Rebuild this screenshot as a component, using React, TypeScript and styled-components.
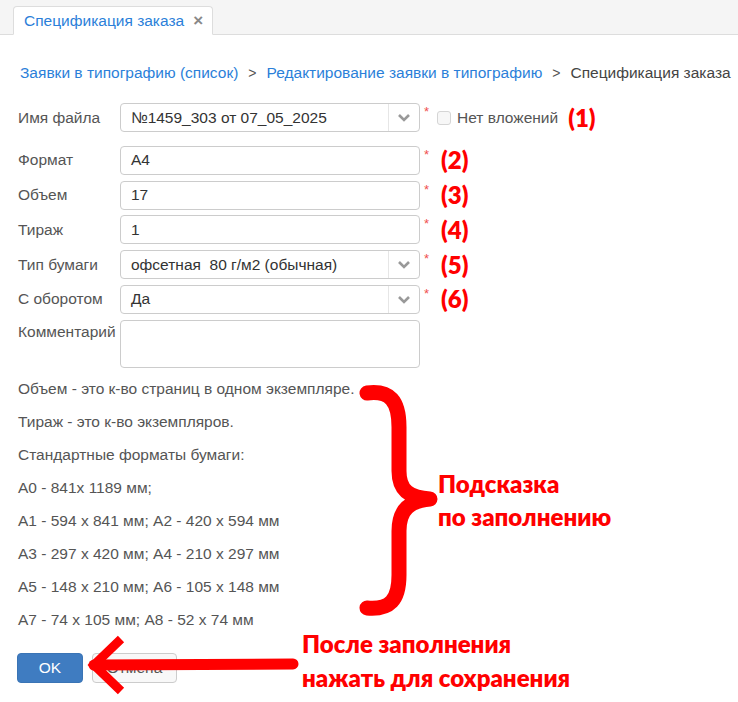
import React from "react";
import styled, { createGlobalStyle } from "styled-components";

const GlobalStyle = createGlobalStyle`
  body {
    margin: 0;
    background: #fff;
    font-family: "Liberation Sans", Arial, sans-serif;
    font-size: 15.5px;
    color: #333;
  }
  * { box-sizing: border-box; }
`;

const LINK = "#2b7fd9";
const MARK = "#ff0000";

const TabBar = styled.div`
  display: flex;
  align-items: flex-end;
  height: 35px;
  padding-left: 13px;
  background: #f5f5f5;
  border-bottom: 1px solid #ddd;
`;

const Tab = styled.div`
  display: flex;
  align-items: center;
  gap: 9px;
  height: 29px;
  margin-bottom: -1px;
  padding: 0 9px 0 10px;
  background: #fff;
  border: 1px solid #ddd;
  border-bottom-color: #fff;
  border-radius: 4px 4px 0 0;
  color: ${LINK};
  font-size: 15.5px;
`;

const Close = styled.span`
  color: #888;
  font-size: 17px;
  font-weight: bold;
  line-height: 1;
`;

const Content = styled.div`
  padding: 0 17px;
`;

const Breadcrumb = styled.div`
  display: flex;
  align-items: center;
  gap: 10px;
  margin-top: 28px;
  padding-left: 3px;
  line-height: 20px;
  color: #444;
  white-space: nowrap;
`;

const Crumb = styled.span`
  color: ${LINK};
`;

const Sep = styled.span`
  color: #555;
  font-size: 14px;
`;

const Form = styled.div`
  display: flex;
  flex-direction: column;
  gap: 5.8px;
  margin-top: 20px;
`;

const Row = styled.div<{ $top?: boolean; $after?: number }>`
  display: flex;
  align-items: ${(p) => (p.$top ? "flex-start" : "center")};
  margin-bottom: ${(p) => p.$after ?? 0}px;
`;

const Label = styled.div<{ $top?: boolean }>`
  width: 103px;
  padding-left: 1px;
  padding-top: ${(p) => (p.$top ? "3px" : "0")};
  color: #555;
  white-space: nowrap;
`;

const Field = styled.div<{ $h?: number }>`
  display: flex;
  align-items: center;
  width: 300px;
  height: ${(p) => p.$h ?? 29}px;
  border: 1px solid #ccc;
  border-radius: 4px;
  background: #fff;
  color: #333;
`;

const Value = styled.div`
  flex: 1;
  padding-left: 10px;
  white-space: pre;
`;

const Caret = styled.div`
  display: flex;
  align-items: center;
  justify-content: center;
  width: 31px;
  height: 100%;
  border-left: 1px solid #e6e6e6;
`;

const Star = styled.span`
  align-self: flex-start;
  margin: 1px 0 0 4px;
  color: #f05050;
  font-size: 13px;
`;

const Mark = styled.span<{ $gap?: number }>`
  margin-left: ${(p) => p.$gap ?? 12}px;
  color: ${MARK};
  font-family: Lato, "Open Sans", sans-serif;
  font-weight: 800;
  font-size: 24px;
  line-height: 1;
`;

const Check = styled.span`
  width: 14px;
  height: 14px;
  margin-left: 8px;
  border: 1px solid #d5d5d5;
  border-radius: 3px;
  background: #f7f7f7;
`;

const CheckText = styled.span`
  margin-left: 6px;
  color: #555;
`;

const HintBlock = styled.div`
  position: relative;
  display: flex;
  flex-direction: column;
  gap: 13px;
  margin-top: 11px;
`;

const Hint = styled.p`
  margin: 0;
  padding-left: 1px;
  line-height: 20px;
  color: #555;
`;

const Brace = styled.svg`
  position: absolute;
  left: 341px;
  top: 0;
`;

const Note = styled.div<{ $left: number; $top: number }>`
  position: absolute;
  left: ${(p) => p.$left}px;
  top: ${(p) => p.$top}px;
  color: ${MARK};
  font-family: Lato, "Open Sans", sans-serif;
  font-weight: 800;
  font-size: 24px;
  line-height: 33px;
  white-space: nowrap;
`;

const ButtonRow = styled.div`
  position: relative;
  display: flex;
  align-items: flex-start;
  margin-top: 4px;
`;

const Button = styled.button<{ $primary?: boolean }>`
  width: ${(p) => (p.$primary ? 66 : 85)}px;
  height: 30px;
  margin-top: 19px;
  margin-right: 9px;
  padding: 0;
  border: 1px solid ${(p) => (p.$primary ? "#3a74b5" : "#ccc")};
  border-radius: 4px;
  background: ${(p) => (p.$primary ? "#3f7cc1" : "#f8f8f8")};
  color: ${(p) => (p.$primary ? "#fff" : "#555")};
  font-family: "Liberation Sans", Arial, sans-serif;
  font-size: 15.5px;
`;

const SaveNote = styled.div`
  margin: -7px 0 0 116px;
  color: ${MARK};
  font-family: Lato, "Open Sans", sans-serif;
  font-weight: 800;
  font-size: 24px;
  line-height: 34px;
  white-space: nowrap;
`;

const Arrow = styled.svg`
  position: absolute;
  left: 69px;
  top: -3px;
`;

const Chevron = () => (
  <svg width="14" height="9" viewBox="0 0 14 9">
    <path d="M2 2 L7 7 L12 2" fill="none" stroke="#999" strokeWidth="2.6" />
  </svg>
);

const Select = ({ value }: { value: string }) => (
  <Field>
    <Value>{value}</Value>
    <Caret>
      <Chevron />
    </Caret>
  </Field>
);

const Input = ({ value }: { value: string }) => (
  <Field>
    <Value>{value}</Value>
  </Field>
);

const hints = [
  "Объем - это к-во страниц в одном экземпляре.",
  "Тираж - это к-во экземпляров.",
  "Стандартные форматы бумаги:",
  "A0 - 841x 1189 мм;",
  "A1 - 594 x 841 мм; A2 - 420 x 594 мм",
  "A3 - 297 x 420 мм; A4 - 210 x 297 мм",
  "A5 - 148 x 210 мм; A6 - 105 x 148 мм",
  "A7 - 74 x 105 мм; A8 - 52 x 74 мм",
];

export default function App() {
  return (
    <>
      <GlobalStyle />
      <TabBar>
        <Tab>
          Спецификация заказа
          <Close>×</Close>
        </Tab>
      </TabBar>
      <Content>
        <Breadcrumb>
          <Crumb>Заявки в типографию (список)</Crumb>
          <Sep>&gt;</Sep>
          <Crumb>Редактирование заявки в типографию</Crumb>
          <Sep>&gt;</Sep>
          <span>Спецификация заказа</span>
        </Breadcrumb>

        <Form>
          <Row $after={8}>
            <Label>Имя файла</Label>
            <Select value="№1459_303 от 07_05_2025" />
            <Star>*</Star>
            <Check />
            <CheckText>Нет вложений</CheckText>
            <Mark $gap={10}>(1)</Mark>
          </Row>
          <Row>
            <Label>Формат</Label>
            <Input value="A4" />
            <Star>*</Star>
            <Mark>(2)</Mark>
          </Row>
          <Row>
            <Label>Объем</Label>
            <Input value="17" />
            <Star>*</Star>
            <Mark>(3)</Mark>
          </Row>
          <Row>
            <Label>Тираж</Label>
            <Input value="1" />
            <Star>*</Star>
            <Mark>(4)</Mark>
          </Row>
          <Row>
            <Label>Тип бумаги</Label>
            <Select value="офсетная  80 г/м2 (обычная)" />
            <Star>*</Star>
            <Mark>(5)</Mark>
          </Row>
          <Row>
            <Label>С оборотом</Label>
            <Select value="Да" />
            <Star>*</Star>
            <Mark>(6)</Mark>
          </Row>
          <Row $top>
            <Label $top>Комментарий</Label>
            <Field $h={48} />
          </Row>
        </Form>

        <HintBlock>
          {hints.map((h) => (
            <Hint key={h}>{h}</Hint>
          ))}
          <Brace width="84" height="240" viewBox="0 0 84 240">
            <path
              d="M9 14 C32 11 41 22 41 48 L41 92 C41 112 52 119 72 120 C52 122 41 130 41 152 L41 196 C41 221 32 231 9 229"
              fill="none"
              stroke={MARK}
              strokeWidth="15"
              strokeLinecap="round"
              strokeLinejoin="round"
            />
          </Brace>
          <Note $left={421} $top={88}>
            Подсказка
            <br />
            по заполнению
          </Note>
        </HintBlock>

        <ButtonRow>
          <Button $primary>OK</Button>
          <Button>Отмена</Button>
          <SaveNote>
            После заполнения
            <br />
            нажать для сохранения
          </SaveNote>
          <Arrow width="216" height="66" viewBox="0 0 216 66">
            <path
              d="M8 34 L207 33"
              fill="none"
              stroke={MARK}
              strokeWidth="11"
              strokeLinecap="round"
            />
            <path
              d="M35 8 L8 34 L35 60"
              fill="none"
              stroke={MARK}
              strokeWidth="9"
            />
          </Arrow>
        </ButtonRow>
      </Content>
    </>
  );
}
